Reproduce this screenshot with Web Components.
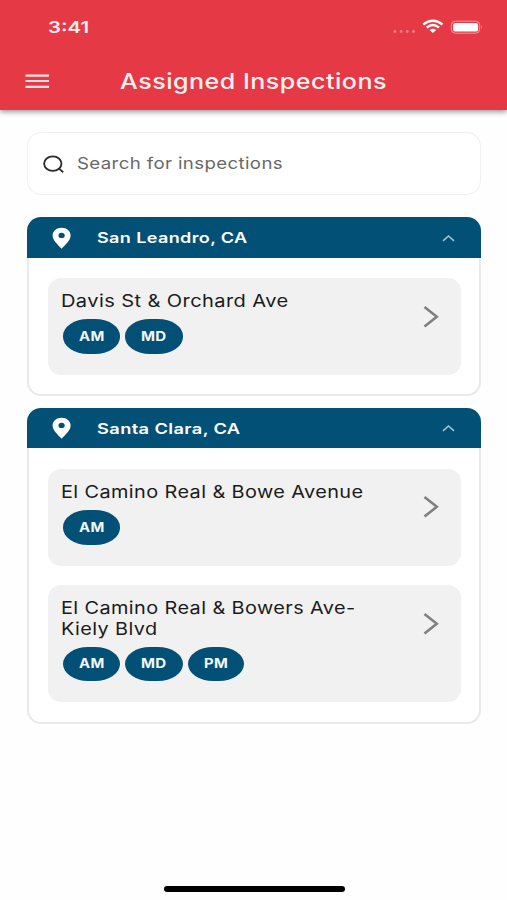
<!DOCTYPE html>
<html lang="en">
<head>
<meta charset="utf-8">
<title>Assigned Inspections</title>
<style>
    body {
        margin: 0;
        background: #fefefe;
        font-family: Inter, "Liberation Sans", sans-serif;
    }
</style>
</head>
<body>
<inspections-app></inspections-app>

<script>
// Text set in a wide face: the line is stretched to the given width
class WideText extends HTMLElement {
    constructor() {
        super();
        this.attachShadow({ mode: "open" });
        this.shadowRoot.innerHTML = `
        <style>
            :host {
                display: block;
                white-space: nowrap;
                letter-spacing: 0.02em;
            }
            span {
                display: inline-block;
                transform-origin: 0 50%;
            }
        </style>
        <span><slot></slot></span>
        `;
    }

    connectedCallback() {
        const width = Number(this.getAttribute("width"));
        const span = this.shadowRoot.querySelector("span");
        this.style.width = `${width}px`;
        span.style.transform = `scaleX(${width / span.getBoundingClientRect().width})`;
    }
}

class StatusBar extends HTMLElement {
    constructor() {
        super();
        this.attachShadow({ mode: "open" });
        this.shadowRoot.innerHTML = `
        <style>
            :host {
                display: flex;
                align-items: center;
                height: 54px;
                padding: 0 25px 0 48px;
                box-sizing: border-box;
            }
            wide-text {
                flex: none;
                font-size: 16.5px;
                font-weight: 600;
                line-height: 20px;
                letter-spacing: 0;
                margin-right: auto;
            }
            svg {
                display: block;
            }
        </style>
        <wide-text width="41">3:41</wide-text>
        <svg width="90" height="18" viewBox="0 0 90 18">
            <g fill="#f0808a">
                <circle cx="2.9" cy="13.5" r="1.4"/>
                <circle cx="9.1" cy="13.5" r="1.4"/>
                <circle cx="15.3" cy="13.5" r="1.4"/>
                <circle cx="21.5" cy="13.5" r="1.4"/>
            </g>
            <g fill="none" stroke="#fff" stroke-width="2.5">
                <path d="M31.3 6.5 Q40.8 -1.1 50.5 6.5"/>
                <path d="M34.8 9.6 Q40.8 4.5 47 9.6"/>
            </g>
            <path d="M37.6 12 Q40.8 9.4 44.2 12 L40.9 15 Z" fill="#fff"/>
            <rect x="59.3" y="3.2" width="28.4" height="12" rx="4" fill="none" stroke="#f29aa1"/>
            <rect x="61.1" y="4.9" width="25" height="8.7" rx="2.2" fill="#fff"/>
            <path d="M89 7 Q90.4 9 89 11 Z" fill="#f29aa1"/>
        </svg>
        `;
    }
}

class AppHeader extends HTMLElement {
    constructor() {
        super();
        this.attachShadow({ mode: "open" });
        this.shadowRoot.innerHTML = `
        <style>
            :host {
                display: block;
                height: 110.4px;
                background: #e63946;
                color: #fff0f0;
                box-shadow: 0 2px 5px rgba(0, 0, 0, 0.4);
            }
            .bar {
                display: flex;
                align-items: center;
                height: 53px;
                padding-left: 25px;
            }
            svg {
                margin-right: 71px;
            }
            wide-text {
                font-size: 21.3px;
                font-weight: 500;
                line-height: 26px;
            }
        </style>
        <status-bar></status-bar>
        <div class="bar">
            <svg width="24" height="16" viewBox="0 0 24 16">
                <path d="M0.5 2.6H24M0.5 8H24M0.5 13.8H24" stroke="#ffe3e3" stroke-width="2.2"/>
            </svg>
            <wide-text width="267"><slot></slot></wide-text>
        </div>
        `;
    }
}

class SearchBox extends HTMLElement {
    constructor() {
        super();
        this.attachShadow({ mode: "open" });
        this.shadowRoot.innerHTML = `
        <style>
            :host {
                display: flex;
                align-items: center;
                height: 63px;
                box-sizing: border-box;
                padding-left: 15px;
                border: 1px solid #f0f0f0;
                border-radius: 14px;
                background: #fff;
                color: #686868;
            }
            svg {
                margin-right: 12px;
            }
            wide-text {
                font-size: 16.5px;
                line-height: 20px;
                margin-bottom: 2px;
            }
        </style>
        <svg width="22" height="18" viewBox="0 0 22 18" fill="none" stroke="#2b2b2b" stroke-width="1.8">
            <ellipse cx="9.8" cy="8.6" rx="8.7" ry="7.2"/>
            <path d="M15.8 13.4L20.2 17.2"/>
        </svg>
        <wide-text width="206"><slot></slot></wide-text>
        `;
    }
}

class InspectionGroup extends HTMLElement {
    constructor() {
        super();
        this.attachShadow({ mode: "open" });
        this.shadowRoot.innerHTML = `
        <style>
            :host {
                display: block;
            }
            header {
                display: flex;
                align-items: center;
                height: 40.5px;
                padding: 0 26px 0 25px;
                border-radius: 14px 14px 0 0;
                background: #035076;
                color: #fff;
            }
            .pin {
                margin-right: 25px;
            }
            .title {
                font-size: 14.7px;
                font-weight: 600;
                line-height: 18px;
                margin: 1px auto 0 0;
            }
            .items {
                display: flex;
                flex-direction: column;
                gap: 19.5px;
                padding: 20.5px 18.5px 19.5px 19px;
                border: 2px solid #e9e9e9;
                border-top: 0;
                border-radius: 0 0 14px 14px;
                background: #fff;
            }
        </style>
        <header>
            <svg class="pin" width="20" height="22" viewBox="0 0 20 22">
                <path d="M9.6 0.8C4.5 0.8 0.6 4.2 0.6 8.4C0.6 13.6 5.9 17.4 9.6 21.8C13.3 17.4 18.6 13.6 18.6 8.4C18.6 4.2 14.7 0.8 9.6 0.8Z" fill="#fff"/>
                <ellipse cx="9.6" cy="8.4" rx="3.1" ry="2.7" fill="#035076"/>
            </svg>
            <wide-text class="title" width="${this.getAttribute("title-width")}">${this.getAttribute("city")}</wide-text>
            <svg width="13" height="8" viewBox="0 0 13 8">
                <path d="M1 6.8L6.5 2L12 6.8" fill="none" stroke="#a4c3d3" stroke-width="1.6"/>
            </svg>
        </header>
        <div class="items"><slot></slot></div>
        `;
    }
}

class InspectionItem extends HTMLElement {
    constructor() {
        super();
        this.attachShadow({ mode: "open" });
        this.shadowRoot.innerHTML = `
        <style>
            :host {
                display: flex;
                justify-content: space-between;
                align-items: flex-start;
                box-sizing: border-box;
                padding: 13px 21.5px 21px 13px;
                border-radius: 13px;
                background: #f1f1f1;
                color: #1b1b1b;
            }
            .name {
                font-size: 17.3px;
                line-height: 20.4px;
            }
            .periods {
                display: flex;
                gap: 5px;
                padding: 7.8px 0 0 2.2px;
            }
            svg {
                margin-top: 13.5px;
            }
        </style>
        <div>
            <div class="name"><slot name="name"></slot></div>
            <div class="periods"><slot></slot></div>
        </div>
        <svg width="16" height="23" viewBox="0 0 16 23">
            <path d="M1.5 2L13.8 11.8L1.5 21.6" fill="none" stroke="#808080" stroke-width="2.6"/>
        </svg>
        `;
    }
}

class PeriodBadge extends HTMLElement {
    constructor() {
        super();
        this.attachShadow({ mode: "open" });
        this.shadowRoot.innerHTML = `
        <style>
            :host {
                display: block;
                padding: 8.5px 16px 8px;
                border-radius: 25px / 17px;
                background: #035076;
                color: #f3f8fa;
                font-size: 12.6px;
                font-weight: 700;
                line-height: 18px;
            }
        </style>
        <wide-text width="${this.getAttribute("text-width")}"><slot></slot></wide-text>
        `;
    }
}

class InspectionsApp extends HTMLElement {
    constructor() {
        super();
        this.attachShadow({ mode: "open" });
        this.shadowRoot.innerHTML = `
        <style>
            :host {
                display: flex;
                flex-direction: column;
                height: 900px;
                overflow: hidden;
            }
            main {
                flex: 1;
                display: flex;
                flex-direction: column;
                padding: 22px 26px 0 26.5px;
            }
            search-box {
                margin-bottom: 21.9px;
            }
            inspection-group {
                margin-bottom: 11.5px;
            }
            .home {
                width: 181px;
                height: 5.6px;
                margin: 0 auto 8.4px 163.6px;
                border-radius: 3px;
                background: #000;
            }
        </style>
        <app-header>Assigned Inspections</app-header>
        <main>
            <search-box>Search for inspections</search-box>
            <inspection-group city="San Leandro, CA" title-width="150.5">
                <inspection-item>
                    <wide-text slot="name" width="227.5">Davis St &amp; Orchard Ave</wide-text>
                    <period-badge text-width="25.5">AM</period-badge>
                    <period-badge text-width="25.5">MD</period-badge>
                </inspection-item>
            </inspection-group>
            <inspection-group city="Santa Clara, CA" title-width="143.5">
                <inspection-item>
                    <wide-text slot="name" width="302.5">El Camino Real &amp; Bowe Avenue</wide-text>
                    <period-badge text-width="25.5">AM</period-badge>
                </inspection-item>
                <inspection-item>
                    <wide-text slot="name" width="294.5">El Camino Real &amp; Bowers Ave-</wide-text>
                    <wide-text slot="name" width="96.5">Kiely Blvd</wide-text>
                    <period-badge text-width="25.5">AM</period-badge>
                    <period-badge text-width="25.5">MD</period-badge>
                    <period-badge text-width="24">PM</period-badge>
                </inspection-item>
            </inspection-group>
        </main>
        <div class="home"></div>
        `;
    }
}

customElements.define("wide-text", WideText);
customElements.define("status-bar", StatusBar);
customElements.define("app-header", AppHeader);
customElements.define("search-box", SearchBox);
customElements.define("period-badge", PeriodBadge);
customElements.define("inspection-item", InspectionItem);
customElements.define("inspection-group", InspectionGroup);
customElements.define("inspections-app", InspectionsApp);
</script>
</body>
</html>
